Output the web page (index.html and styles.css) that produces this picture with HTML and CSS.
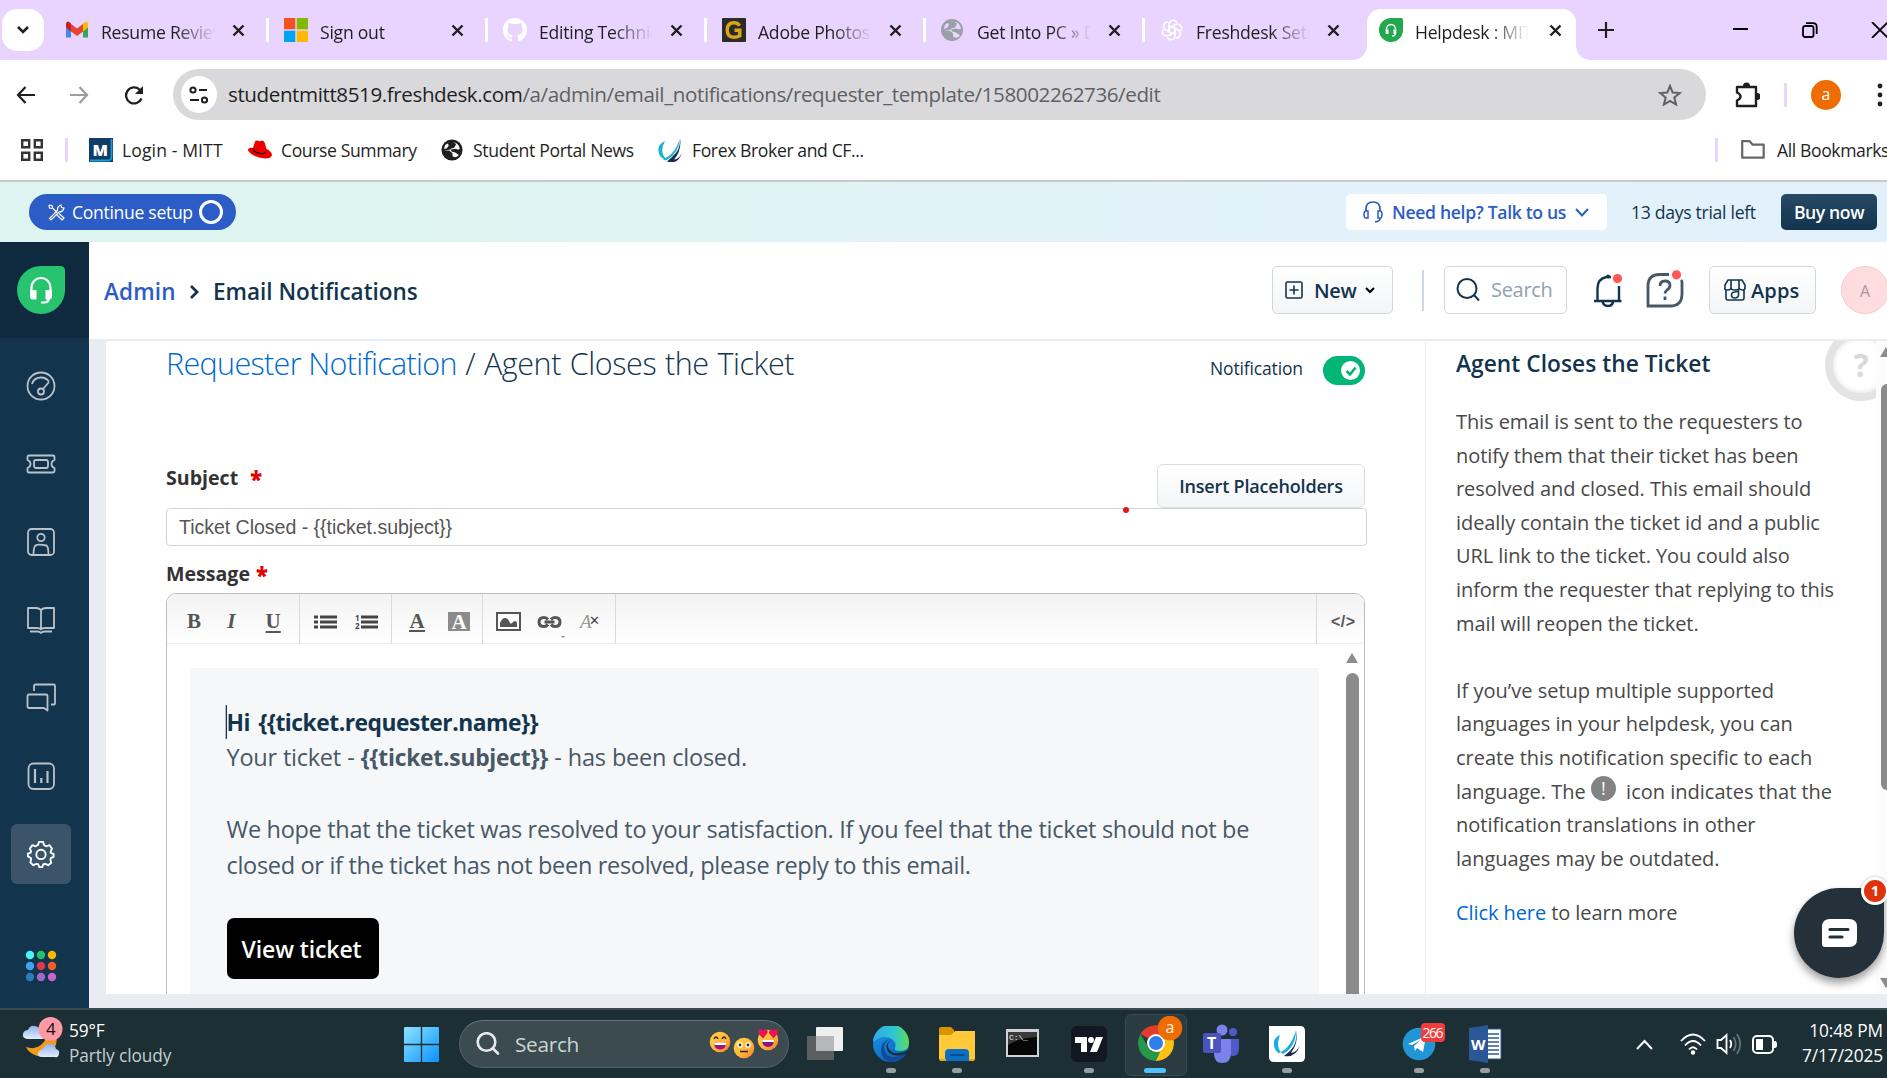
FILE: index.html
```html
<!DOCTYPE html>
<html lang="en">
<head>
<meta charset="utf-8">
<title>Helpdesk : MITT</title>
<link rel="stylesheet" href="styles.css">
</head>
<body>
<header class="tabstrip">
  <button class="tabsearch"><svg width="14" height="10" viewBox="0 0 14 10"><path d="M2 2l5 5 5-5" fill="none" stroke="#1f1f1f" stroke-width="2.6"/></svg></button>
  <div class="tab">
    <svg class="fav" viewBox="0 0 24 24"><path d="M1 5v14.500h5V9z" fill="#4285f4"/><path d="M23 5v14.500h-5V9z" fill="#34a853"/><path d="M18 5.500L21 3.500q2 0 2 2.500v3.500l-5 4z" fill="#fbbc04"/><path d="M6 6l6 4.500L18 6v7.500l-6 4.500-6-4.500z" fill="#ea4335"/><path d="M1 9.500V6q0-2.500 2.500-2.500L6 5.500v8z" fill="#c5221f"/></svg>
    <span class="tabtitle">Resume Review</span><svg class="x" viewBox="0 0 13 13"><path d="M1.500 1.500l10 10M11.500 1.500l-10 10"/></svg><i class="sep"></i>
  </div>
  <div class="tab">
    <svg class="fav" viewBox="0 0 24 24"><path d="M0 0h11.300v11.300H0z" fill="#f25022"/><path d="M12.700 0H24v11.300H12.700z" fill="#7fba00"/><path d="M0 12.700h11.300V24H0z" fill="#00a4ef"/><path d="M12.700 12.700H24V24H12.700z" fill="#ffb900"/></svg>
    <span class="tabtitle">Sign out</span><svg class="x" viewBox="0 0 13 13"><path d="M1.500 1.500l10 10M11.500 1.500l-10 10"/></svg><i class="sep"></i>
  </div>
  <div class="tab">
    <svg class="fav" viewBox="0 0 16 16"><path fill="#fff" d="M8 0C3.580 0 0 3.580 0 8c0 3.540 2.290 6.530 5.470 7.590.4.070.55-.17.55-.38v-1.490c-2.010.37-2.530-.49-2.690-.94-.09-.23-.48-.94-.82-1.130-.28-.15-.68-.52-.01-.53.63-.01 1.080.58 1.230.82.72 1.210 1.870.87 2.330.66.07-.52.28-.87.51-1.070-1.780-.2-3.640-.89-3.640-3.950 0-.87.31-1.590.82-2.150-.08-.2-.36-1.020.08-2.120 0 0 .67-.21 2.200.82A7.400 7.400 0 0 1 8 3.860c.68 0 1.360.09 2 .27 1.530-1.040 2.200-.82 2.200-.82.44 1.100.16 1.920.08 2.120.51.56.82 1.270.82 2.150 0 3.070-1.870 3.750-3.650 3.950.29.25.54.73.54 1.480v2.200c0 .21.15.46.55.38A8 8 0 0 0 16 8c0-4.420-3.580-8-8-8z"/></svg>
    <span class="tabtitle">Editing Technical</span><svg class="x" viewBox="0 0 13 13"><path d="M1.500 1.500l10 10M11.500 1.500l-10 10"/></svg><i class="sep"></i>
  </div>
  <div class="tab">
    <svg class="fav" viewBox="0 0 24 24"><rect width="24" height="24" rx="1" fill="#2b2b2b"/><path d="M17.500 7.800Q16 4.800 12 4.800q-6.800 0-6.800 7.200t6.800 7.200q3 0 5.800-1.500V12.300H12.500" fill="none" stroke="#dca516" stroke-width="3.400"/></svg>
    <span class="tabtitle">Adobe Photoshop</span><svg class="x" viewBox="0 0 13 13"><path d="M1.500 1.500l10 10M11.500 1.500l-10 10"/></svg><i class="sep"></i>
  </div>
  <div class="tab">
    <svg class="fav" viewBox="0 0 24 24"><circle cx="11" cy="12" r="11" fill="#9aa0a6"/><path d="M2.500 12.500h6l3.500 3v3q4 3 7-1-4-4-8-4l-1-3 4-1 2-4-3-2q6 1 7 7-2 2-4 0M3 11q0-5 4-6l1 2-2 3z" fill="#e8d4ff"/></svg>
    <span class="tabtitle">Get Into PC » Download</span><svg class="x" viewBox="0 0 13 13"><path d="M1.500 1.500l10 10M11.500 1.500l-10 10"/></svg><i class="sep"></i>
  </div>
  <div class="tab">
    <svg class="fav" viewBox="0 0 24 24"><g fill="none" stroke="#fff" stroke-width="1.500"><path id="petal" d="M9 13.700V6.500a4.200 4.200 0 0 1 8-1.800M9 10.200l5.700-3.300"/><use href="#petal" transform="rotate(60 12 12)"/><use href="#petal" transform="rotate(120 12 12)"/><use href="#petal" transform="rotate(180 12 12)"/><use href="#petal" transform="rotate(240 12 12)"/><use href="#petal" transform="rotate(300 12 12)"/></g></svg>
    <span class="tabtitle">Freshdesk Setup</span><svg class="x" viewBox="0 0 13 13"><path d="M1.500 1.500l10 10M11.500 1.500l-10 10"/></svg>
  </div>
  <div class="tab active">
    <svg class="fav" viewBox="0 0 24 24"><path d="M12 0h10q2 0 2 2v10A12 12 0 1 1 12 0z" fill="#22a94f"/><path d="M7.500 15v-4a4.500 4.500 0 0 1 9 0v4M16.500 15q0 3-3.500 3" fill="none" stroke="#fff" stroke-width="1.400"/><path d="M6.800 11.500h2.700V16H6.800zM14.500 11.500h2.700V16h-2.700z" fill="#fff"/></svg>
    <span class="tabtitle">Helpdesk : MITT</span><svg class="x" viewBox="0 0 13 13"><path d="M1.500 1.500l10 10M11.500 1.500l-10 10"/></svg>
  </div>
  <svg class="newtab" width="16" height="16" viewBox="0 0 16 16"><path d="M8 0v16M0 8h16" stroke="#1f1f1f" stroke-width="2.200"/></svg>
  <div class="winctl">
    <svg width="16" height="16" viewBox="0 0 16 16"><path d="M0 7h15" stroke="#000" stroke-width="2"/></svg>
    <svg width="16" height="16" viewBox="0 0 16 16" fill="none" stroke="#000" stroke-width="1.800"><rect x="1" y="4" width="10.500" height="11" rx="2"/><path d="M4 1.200h7q3.700 0 3.700 3.700v7"/></svg>
    <svg width="18" height="16" viewBox="0 0 18 16"><path d="M1 0l16 16M17 0L1 16" stroke="#000" stroke-width="1.800"/></svg>
  </div>
</header>

<div class="toolbar">
  <svg class="back" width="19" height="18" viewBox="0 0 19 18" fill="none" stroke="#1f1f1f" stroke-width="2.200"><path d="M9.500 1L2 9l7.500 8M2 9h17"/></svg>
  <svg class="fwd" width="19" height="18" viewBox="0 0 19 18" fill="none" stroke="#9c9c9c" stroke-width="2.200"><path d="M9.500 1L17 9l-7.500 8M17 9H0"/></svg>
  <svg class="reload" width="21" height="20" viewBox="0 0 21 20"><path d="M17.500 13.500A8 8 0 1 1 15.500 4.500L18 7" fill="none" stroke="#1f1f1f" stroke-width="2.300"/><path d="M19 1v8h-8z" fill="#1f1f1f"/></svg>
  <div class="omnibox">
    <span class="siteinfo"><svg width="20" height="18" viewBox="0 0 20 18" fill="none" stroke="#1f1f1f" stroke-width="2"><circle cx="4" cy="4" r="2.600"/><path d="M10 4h8M1 14h9"/><circle cx="15.500" cy="14" r="2.600"/></svg></span>
    <span class="url"><b>studentmitt8519.freshdesk.com</b>/a/admin/email_notifications/requester_template/158002262736/edit</span>
    <svg class="star" width="24" height="22" viewBox="0 0 24 22"><path d="M12 2l2.700 6.600 7 .5-5.400 4.500 1.800 6.900L12 16.800l-6.100 3.700 1.800-6.900L2.300 9.100l7-.5z" fill="none" stroke="#5f6063" stroke-width="2"/></svg>
  </div>
  <svg class="puzzle" width="26" height="26" viewBox="0 0 26 26"><path d="M3 5h19v19H3v-5.500q3.500-1.500 3.500-4T3 10.500z" fill="none" stroke="#1f1f1f" stroke-width="2.400" stroke-linejoin="round"/><path d="M9 4a3.500 3.500 0 0 1 7 0zM23 11a3 3 0 0 1 0 7z" fill="#1f1f1f"/></svg>
  <i class="vline"></i>
  <span class="profile">a</span>
  <svg class="dots" width="6" height="26" viewBox="0 0 6 26" fill="#1f1f1f"><circle cx="3" cy="4" r="2.400"/><circle cx="3" cy="13" r="2.400"/><circle cx="3" cy="22" r="2.400"/></svg>
</div>

<div class="bookmarks">
  <svg class="grid" width="22" height="22" viewBox="0 0 22 22" fill="none" stroke="#333" stroke-width="2.400"><path d="M1.200 1.200h7v7h-7zM13.800 1.200h7v7h-7zM1.200 13.800h7v7h-7zM13.800 13.800h7v7h-7z"/></svg>
  <i class="vline"></i>
  <span class="bm bm1"><svg width="24" height="24" viewBox="0 0 24 24"><path d="M0 0h24v24H0z" fill="#113c66"/><path d="M1 22.500h18q3.500 0 3.500-3.500V1" fill="none" stroke="#1b9ad6" stroke-width="1.800"/><text x="3.500" y="17.500" font-size="16" font-weight="800" fill="#fff">M</text></svg>Login - MITT</span>
  <span class="bm bm2"><svg width="24" height="20" viewBox="0 0 24 20"><path d="M5 8L7 1.500Q8 0 10 .8t4-.3q2 0 3 3L18.500 9q4.500 2 5.500 5.500 0 4-7 4Q4 17 0 10.500 0 7 5 8z" fill="#e00"/><path d="M5 8q1 4 7 5t6.500-3.500v2q-1 3.500-7 2.500T4.500 9.500z" fill="#000"/></svg>Course Summary</span>
  <span class="bm bm3"><svg width="22" height="22" viewBox="0 0 24 24"><circle cx="12" cy="12" r="11.500" fill="#1f1f1f"/><path d="M3 12.500h6l3.500 3v3q4 3 7-1-4-4-8-4l-1-3 4-1 2-4-3-2q6 1 7 7-2 2-4 0M3.500 11q0-5 4-6l1 2-2 3z" fill="#fff"/></svg>Student Portal News</span>
  <span class="bm bm4"><svg width="25" height="24" viewBox="0 0 25 24"><path d="M7 3Q-3 8 2 18q3 4 6 3Q1 14 7 3z" fill="#18b4cf"/><path d="M22 0Q21 15 9 22q-3 1-4-1Q17 17 22 0z" fill="#18b4cf"/><path d="M22 0q1 12-8 19l-5 4.500Q20 27 24 15q-3 6-8 6.500Q24 12 22 0z" fill="#1c2b52"/></svg>Forex Broker and CF...</span>
  <i class="vline end"></i>
  <span class="bm all"><svg width="24" height="19" viewBox="0 0 24 19"><path d="M1.200 1.200h7.500l3 3.500h11v13H1.200z" fill="none" stroke="#666" stroke-width="2.200" stroke-linejoin="round"/></svg>All Bookmarks</span>
</div>

<div class="trialbar">
  <button class="setup"><svg width="17" height="17" viewBox="0 0 17 17" fill="none" stroke="#fff" stroke-width="1.200"><path d="M1.500 14.500l8-8Q9 2.500 13 1l.5 2.500L16 4q-1 4-5 4l-8 8zM1 1l3 .5.500 2.500L9 8.500M1 1l.5 3L4 4.500M11 9.500l5 4.500-2 2-5-5"/></svg>Continue setup<i></i></button>
  <button class="talk"><svg width="20" height="22" viewBox="0 0 20 22" fill="none" stroke="#2c5cc5" stroke-width="1.700"><path d="M3 10V8q0-7 7-7t7 7v2M17 17v1q0 2-5 3"/><path d="M5 10v7H3q-2 0-2-3.500T3 10zM15 10v7h2q2 0 2-3.500T17 10z" stroke-width="1.500"/></svg><b>Need help? Talk to us</b><svg width="14" height="9" viewBox="0 0 14 9"><path d="M1 1l6 6.500L13 1" fill="none" stroke="#2c5cc5" stroke-width="2"/></svg></button>
  <span class="days">13 days trial left</span>
  <button class="buy">Buy now</button>
</div>

<div class="app">
  <nav class="sidebar">
    <div class="logo"><svg width="48" height="48" viewBox="0 0 48 48"><path d="M24 0h19q5 0 5 5v19A24 24 0 1 1 24 0z" fill="#27c36f"/><path d="M14.500 25v-3.500a9.500 9.500 0 0 1 19 0V25M32 31q0 5-4 5.500h-4" fill="none" stroke="#fff" stroke-width="2.200"/><path d="M13 24h6.500v9.500H16q-3 0-3-3zM28.500 24H35v6.500q0 3-3 3h-3.500z" fill="#fff"/></svg></div>
    <div class="navitems">
      <span><svg viewBox="0 0 30 30"><circle cx="15" cy="15" r="13.500"/><path d="M6 13Q8 6.500 15 6.500q5 0 8 4M17 18l6-7"/><circle cx="15" cy="20.500" r="3"/></svg></span>
      <span><svg viewBox="0 0 30 30"><path d="M3 6.500h24q1.500 0 1.500 1.500v3q-3 1-3 4t3 4v3q0 1.500-1.500 1.500H3Q1.500 23.500 1.500 22v-3q3-1 3-4t-3-4V8Q1.500 6.500 3 6.500z"/><rect x="8" y="11" width="14" height="8" rx="2"/></svg></span>
      <span><svg viewBox="0 0 30 30"><rect x="2" y="2" width="26" height="26" rx="3.500"/><circle cx="15" cy="10.500" r="3.700"/><path d="M7.500 28q0-8 2-9.500t11 0q2 1.500 2 9.500"/></svg></span>
      <span><svg viewBox="0 0 30 30"><path d="M15 5q-2-2-5-2H2v20h9q3 0 4 1.500 1-1.500 4-1.500h9V3h-8q-3 0-5 2v19M4 26.500h7q3 0 4 1.500 1-1.500 4-1.500h7"/></svg></span>
      <span><svg viewBox="0 0 30 30"><path d="M8 8V3q0-1.500 1.500-1.500h18Q29 1.500 29 3v17.500q0 1-1 1h-3"/><path d="M3 11.500h17q1.500 0 1.500 1.500v14.500L18 25H3q-1.500 0-1.500-1.500V13q0-1.500 1.500-1.500z"/></svg></span>
      <span><svg viewBox="0 0 30 30"><rect x="2.500" y="2.500" width="25.500" height="25.500" rx="5"/><path d="M9 8v14M15.300 17v5M21.500 10v12" stroke-width="2.200"/></svg></span>
      <span class="on"><svg viewBox="0 0 30 30"><path d="M11.800 5.200L12.800 2h4.400l1 3.200q1 1 2.700 1.500L24 5.500l2.800 3.700-1.500 3.300q0 .8.500 1.500l2.700 1v3l-3 1.500-.5 1.500 1 3.300-3.300 2.700-3.200-1.500-2 .5-1.300 3h-3l-1.200-3-2-.5-3.200 1.500L3.500 24l1-3.300-.5-1.500-3-1.500v-3l3-1.200.3-1.500L3 9.200l2.800-3.700 3.300 1.200z"/><circle cx="15" cy="15.500" r="5"/></svg></span>
    </div>
    <svg class="apps9" width="32" height="32" viewBox="0 0 32 32"><circle cx="5" cy="5" r="4.200" fill="#4af3f8"/><circle cx="16" cy="5" r="4.200" fill="#24c16b"/><circle cx="27" cy="5" r="4.200" fill="#ffb700"/><circle cx="5" cy="16" r="4.200" fill="#45a4ee"/><circle cx="16" cy="16" r="4.200" fill="#d83b50"/><circle cx="27" cy="16" r="4.200" fill="#f15f27"/><circle cx="5" cy="27" r="4.200" fill="#3079b8"/><circle cx="16" cy="27" r="4.200" fill="#a066c8"/><circle cx="27" cy="27" r="4.200" fill="#c765c9"/></svg>
  </nav>

  <div class="main">
    <div class="apphead">
      <a class="crumb">Admin</a><svg class="chev" width="9" height="14" viewBox="0 0 9 14"><path d="M1 1l6 6-6 6" fill="none" stroke="#12344d" stroke-width="2.800"/></svg><h1>Email Notifications</h1>
      <button class="btn new"><svg width="18" height="18" viewBox="0 0 18 18" fill="none" stroke="#12344d" stroke-width="1.600"><rect x="1" y="1" width="16" height="16" rx="1.500"/><path d="M9 4.500v9M4.500 9h9"/></svg>New<svg width="10" height="7" viewBox="0 0 10 7"><path d="M1 1l4 4 4-4" fill="none" stroke="#000" stroke-width="2.200"/></svg></button>
      <i class="hdiv"></i>
      <div class="search"><svg width="24" height="24" viewBox="0 0 24 24" fill="none" stroke="#12344d" stroke-width="2"><circle cx="11" cy="10.500" r="9.500"/><path d="M18 17l5 5.500"/></svg>Search</div>
      <svg class="bell" width="28" height="34" viewBox="0 0 28 34" fill="none" stroke="#12344d" stroke-width="2.400"><path d="M0 28h27.500M3.500 28V15q0-9 9-11h4.500M25 13v15M8.500 28.500q1 4.500 5.500 4.500t5-4.500"/><circle cx="14" cy="3.500" r="1.500" fill="#12344d" stroke-width="1"/><circle cx="23.500" cy="5.500" r="4.600" fill="#ff5656" stroke="none"/></svg>
      <svg class="help" width="38" height="38" viewBox="0 0 38 38" fill="none" stroke="#475867" stroke-width="2.800"><path d="M23 4.500H14Q2 4.500 2 16v20h22q12 0 12-12V12q0-1-1-2"/><path d="M14 16q0-5 5-5t5 4.500q0 2.500-3 4.500-2 1.500-2 3.500M19 26.500v3.500"/><circle cx="30.500" cy="4.800" r="4.600" fill="#ff5656" stroke="none"/></svg>
      <button class="btn appsbtn"><svg width="22" height="22" viewBox="0 0 22 22" fill="none" stroke="#12344d" stroke-width="1.600"><path d="M4 1h14l3 5v3q0 2-2.500 2T15 9q0 2-4 2T7 9q0 2-3.500 2T1 9V6zM2 11v8q0 2 2 2h14q2 0 2-2v-8M7 9V1M15 9V1"/><path d="M14.500 12v4a3.500 3 0 1 1-3.500-3z"/></svg>Apps</button>
      <span class="avatar">A</span>
    </div>
    <div class="canvas">
      <div class="panel">
        <section class="form">
          <div class="titlerow"><h2><a>Requester Notification</a> <em>/ Agent Closes the Ticket</em></h2><span class="nlabel">Notification</span><span class="toggle"><i><svg width="12" height="10" viewBox="0 0 12 10"><path d="M1.500 5L5 8.500l5.500-7" fill="none" stroke="#00b36b" stroke-width="2.500"/></svg></i></span></div>
          <div class="subjrow"><label>Subject <b class="gap">*</b></label><button class="insert">Insert Placeholders</button></div>
          <div class="input">Ticket Closed - {{ticket.subject}}<i class="reddot"></i></div>
          <label class="msg">Message <b>*</b></label>
          <div class="editor">
            <div class="edbar">
              <div class="g g1"><b>B</b><b class="it">I</b><b class="ul">U</b></div>
              <div class="g g2"><svg width="23" height="14" viewBox="0 0 23 14" stroke="#444" stroke-width="3"><path d="M0 2h4M6 2h17M0 7h4M6 7h17M0 12h4M6 12h17"/></svg><svg width="23" height="16" viewBox="0 0 23 16"><path d="M6 3h17M6 8h17M6 13h17" stroke="#444" stroke-width="3"/><text x="0" y="7" font-size="8">1</text><text x="0" y="15" font-size="8">2</text></svg></div>
              <div class="g g3"><b class="fc">A</b><b class="bc">A</b></div>
              <div class="g g4"><svg width="25" height="19" viewBox="0 0 25 19"><rect x="1" y="1" width="23" height="17" fill="#fff" stroke="#555" stroke-width="2"/><path d="M4 15v-4q2-5 5-5 3 0 5 5 1 1 2 0 2-2 3-2 2 0 2 3v3z" fill="#555"/></svg><svg width="25" height="12" viewBox="0 0 25 12" fill="none" stroke="#555" stroke-width="3"><path d="M11 3.500Q9.500 1.500 7 1.500q-5 0-5 4.500t5 4.500q2.500 0 4-2M14 3.500q1.500-2 4-2 5 0 5 4.500t-5 4.500q-2.500 0-4-2M7.500 6h10"/></svg><span class="clr">A<b>✕</b></span><i class="tri"></i></div>
              <div class="g g5">&lt;/&gt;</div>
            </div>
            <div class="edbody">
              <div class="mail">
                <p class="hi">Hi {{ticket.requester.name}}</p>
                <p class="l2">Your ticket - <b>{{ticket.subject}}</b> - has been closed.</p>
                <p class="para">We hope that the ticket was resolved to your satisfaction. If you feel that the ticket should not be<br>closed or if the ticket has not been resolved, please reply to this email.</p>
                <a class="view">View ticket</a>
              </div>
              <div class="escroll"><i class="up"></i><i class="thumb"></i></div>
            </div>
          </div>
        </section>
        <aside class="info">
          <h3>Agent Closes the Ticket</h3>
          <p>This email is sent to the requesters to<br>notify them that their ticket has been<br>resolved and closed. This email should<br>ideally contain the ticket id and a public<br>URL link to the ticket. You could also<br>inform the requester that replying to this<br>mail will reopen the ticket.</p>
          <p>If you’ve setup multiple supported<br>languages in your helpdesk, you can<br>create this notification specific to each<br>language. The <i class="warn">!</i> icon indicates that the<br>notification translations in other<br>languages may be outdated.</p>
          <p class="more"><a>Click here</a> to learn more</p>
          <span class="qmark">?</span>
        </aside>
        <div class="pscroll"><i class="up"></i><i class="thumb"></i><i class="down"></i></div>
      </div>
    </div>
  </div>
  <div class="chat"><svg width="35" height="28" viewBox="0 0 35 28"><path d="M8 0h19q8 0 8 8v12q0 8-8 8H3q-3 0-3-3V8q0-8 8-8z" fill="#fff"/><path d="M8 10.500h18M8 18h12" stroke="#24313a" stroke-width="3.200" stroke-linecap="round"/></svg><span>1</span></div>
</div>

<footer class="taskbar">
  <div class="weather">
    <svg width="42" height="42" viewBox="0 0 42 42"><defs><linearGradient id="cl" x2="0" y2="1"><stop stop-color="#8fb3ec"/><stop offset="1" stop-color="#e2ecfc"/></linearGradient></defs><path d="M34 16a15 15 0 0 1-29 14q9 3 15-2t8-16z" fill="#f39a1e"/><path d="M6 22q-5-1-4-5t5-4q2-5 7-4t5 5q4 1 3 8z" fill="url(#cl)"/><path d="M20 40q-4-1-3-4t5-4q2-5 7-5t6 5q4 1 3 5t-4 3z" fill="url(#cl)"/><circle cx="29.500" cy="12" r="12" fill="#ff99a4"/><text x="25" y="18" font-size="17" fill="#111">4</text></svg>
    <div><p>59°F</p><p class="dim">Partly cloudy</p></div>
  </div>
  <svg class="start" width="35" height="35" viewBox="0 0 35 35"><defs><linearGradient id="wn" x2="1" y2="1"><stop stop-color="#8be3ff"/><stop offset="1" stop-color="#0a93ff"/></linearGradient></defs><path d="M0 1q0-1 1-1h15.800v16.800H0zM18.200 0H34q1 0 1 1v15.800H18.200zM0 18.200h16.800V35H1q-1 0-1-1zM18.200 18.200H35V34q0 1-1 1H18.200z" fill="url(#wn)"/></svg>
  <div class="tsearch"><svg width="24" height="24" viewBox="0 0 24 24" fill="none" stroke="#e6eaeb" stroke-width="2.600"><circle cx="10.500" cy="10" r="8.800"/><path d="M17 16.500l5 5" stroke-linecap="round"/></svg>Search
    <svg class="emojis" width="70" height="30" viewBox="0 0 70 30"><defs><linearGradient id="em" x1="0" x2="1" y2="1"><stop stop-color="#ffd93f"/><stop offset=".6" stop-color="#ffb436"/><stop offset="1" stop-color="#f2742b"/></linearGradient></defs><circle cx="11" cy="13" r="10.300" fill="url(#em)"/><path d="M5 13.500h12q0 7-6 7t-6-7z" fill="#a3137f"/><path d="M5 13.500h12v2.500H5.500z" fill="#fff"/><path d="M5 10q2-4 4 0M13 10q2-4 4 0" fill="none" stroke="#402a32" stroke-width="1.500"/><circle cx="35" cy="19" r="10.300" fill="url(#em)"/><circle cx="31" cy="16" r="2.800" fill="#fff"/><circle cx="39" cy="16" r="2.800" fill="#fff"/><circle cx="31" cy="16" r="1.400" fill="#402a32"/><circle cx="39" cy="16" r="1.400" fill="#402a32"/><path d="M31 22.500h8" stroke="#402a32" stroke-width="1.700"/><circle cx="59" cy="11" r="10.300" fill="url(#em)"/><path d="M53 11h12q0 7-6 7t-6-7z" fill="#8f1386"/><path d="M53 11h12v2H53.500z" fill="#fff"/><path d="M54 9.500L49 4q0-4 3-4l2 1.500L56.500 0Q59 0 58.500 4zM64.500 9.500L60 4q0-4 3-4l1.500 1.500L67 0q3 1 2 4z" fill="#e8145b"/></svg>
  </div>
  <div class="tasks">
    <span><svg width="38" height="36" viewBox="0 0 38 36"><rect x="1" y="10" width="27" height="24" rx="1" fill="#5c5f60"/><rect x="10" y="1" width="27" height="24" rx="1" fill="#efefef"/><path d="M10 10h18v15H10z" fill="#b5b7b8"/></svg></span>
    <span class="run"><svg width="36" height="36" viewBox="0 0 36 36"><defs><linearGradient id="eg" x2="1"><stop stop-color="#2fa9ef"/><stop offset=".6" stop-color="#2fc6cf"/><stop offset="1" stop-color="#5fdc55"/></linearGradient><linearGradient id="eb" x2=".6" y2="1"><stop stop-color="#1b9de6"/><stop offset="1" stop-color="#0a63c4"/></linearGradient></defs><circle cx="18" cy="18" r="18" fill="url(#eb)"/><path d="M0 16A18 18 0 0 1 36 17q0 8-9 8-6 0-5-3 2-5-3-9Q10 8 0 16z" fill="url(#eg)"/><path d="M11 22q1 9 10 9 7 0 12-4-6 9-16 9-9-3-9-12 0-8 8-11-5 4-5 9z" fill="#114a97"/><path d="M18 14q-5 4-2 9 3 5 10 4 5 0 9-3l3 1-5 3q-10 4-17-1-6-8 2-13z" fill="#1c3034"/></svg></span>
    <span class="run"><svg width="36" height="34" viewBox="0 0 36 34"><path d="M0 2q0-2 2-2h10l3 3v6H0z" fill="#d99400"/><path d="M0 8h12l4-4h20v28H0z" fill="#ffc93a"/><path d="M6 34v-8q0-4 4-4h16q4 0 4 4v8z" fill="#0d6fc2"/><path d="M11 28h14" stroke="#0a4d94" stroke-width="2"/><path d="M0 32h7v2H1zM30 32h6l-1 2h-5z" fill="#e9a90e"/></svg></span>
    <span><svg class="cmd" width="33" height="28" viewBox="0 0 33 28"><path d="M0 0h33v28H0z" fill="#cfd3d5"/><path d="M2 3h29v23H2z" fill="#070707"/><path d="M2 3h29v5Q12 9 2 16z" fill="#3a3a3a"/><text x="3" y="11" font-size="8" class="mono" fill="#eee">C:\_</text></svg></span>
    <span class="run"><svg width="36" height="36" viewBox="0 0 36 36"><rect width="36" height="36" rx="6" fill="#131722"/><path d="M4 11h12v15h-6v-9H4z" fill="#fff"/><circle cx="20" cy="14" r="3" fill="#fff"/><path d="M25 11h7l-6 15h-7z" fill="#fff"/></svg></span>
    <span class="run cur"><svg width="46" height="46" viewBox="0 0 46 46"><path d="M19 27L3.500 18A18 18 0 0 1 34.500 18z" fill="#e33b2e"/><path d="M19 27l15.500-9A18 18 0 0 1 19 45z" fill="#fbc116"/><path d="M19 45A18 18 0 0 1 3.500 18L11.200 31.500q3 5 7.800 4.500h4z" fill="#269847"/><circle cx="19" cy="27" r="9" fill="#fff"/><circle cx="19" cy="27" r="7" fill="#2f7de9"/><circle cx="33" cy="12" r="12.300" fill="#ee6c02"/><text x="28.500" y="17" font-size="16" fill="#fff3e2">a</text></svg></span>
    <span><svg width="36" height="40" viewBox="0 0 36 40"><circle cx="19" cy="6" r="5.500" fill="#7b83eb"/><circle cx="30" cy="8" r="4" fill="#5059c9"/><path d="M24 15h12v10q0 7-6 7-5 0-6-5z" fill="#5059c9"/><path d="M11 15h17v14q0 10-9 10-8 0-8-10z" fill="#7b83eb"/><rect y="9" width="18" height="20" rx="2" fill="#4b53bc"/><text x="4" y="25" font-size="16" font-weight="700" fill="#fff">T</text></svg></span>
    <span class="run"><svg width="36" height="36" viewBox="0 0 36 36"><path d="M0 0h31q5 0 5 5v26q0 5-5 5H5q-5 0-5-5z" fill="#fff"/><path d="M11 9Q2 13 6 23q3 6 8 5Q6 22 11 9zM27 4q0 17-13 24-3 1-4-1Q22 22 27 4z" fill="#18aee6"/><path d="M27 4q2 13-6 21l-6 5q12 2 16-11-3 7-9 8Q30 16 27 4z" fill="#1b2748"/></svg></span>
    <span></span>
    <span class="run"><svg class="tg" width="44" height="40" viewBox="0 0 44 40"><circle cx="17" cy="22" r="16.300" fill="#2295d4"/><path d="M6 22l18-8-3 16-6-4-2 3-1-5 7-6-9 5z" fill="#fff"/><rect x="19" y="1" width="24" height="19" rx="4" fill="#f23b3b"/><text x="20.500" y="16" font-size="14" fill="#fff" textLength="21">266</text></svg></span>
    <span class="run"><svg width="33" height="38" viewBox="0 0 33 38"><rect x="15" y="4" width="17" height="30" fill="#fff" stroke="#2b5797"/><path d="M19 9h11M19 13h11M19 17h11M19 21h11M19 25h11M19 29h11" stroke="#2b5797" stroke-width="1.600"/><path d="M0 3l19-3v38L0 35z" fill="#2b5797"/><text x="2" y="25" font-size="15" font-weight="700" fill="#fff">W</text></svg></span>
  </div>
  <div class="tray">
    <svg width="17" height="11" viewBox="0 0 17 11"><path d="M1 10l7.500-8L16 10" fill="none" stroke="#fff" stroke-width="2"/></svg>
    <svg class="wifi" width="26" height="22" viewBox="0 0 26 22" fill="none" stroke="#fff" stroke-width="1.800"><path d="M1 8q12-13 24 0M5 12.500q8-9 16 0M9 16.500q4-4.500 8 0"/><circle cx="13" cy="19.500" r="1.300" fill="#fff"/></svg>
    <svg class="vol" width="26" height="24" viewBox="0 0 26 24" fill="none" stroke="#fff" stroke-width="1.800"><path d="M1.500 8H5l5.500-5v18L5 16H1.500zM14 8q2.500 4 0 8"/><path d="M17.500 5q4.500 7 0 14M21 2q6.500 10 0 20" stroke="#64757a"/></svg>
    <svg class="batt" width="25" height="19" viewBox="0 0 25 19"><rect x="1" y="1" width="20" height="17" rx="4" fill="none" stroke="#fff" stroke-width="2"/><path d="M4 4h7v11H4zM22 6h1q2 0 2 3.500T23 13h-1z" fill="#fff"/></svg>
    <div class="clock"><p>10:48 PM</p><p>7/17/2025</p></div>
  </div>
</footer>
</body>
</html>
```
FILE: styles.css
```css
* { box-sizing: border-box; }
body { margin: 0; width: 1887px; height: 1078px; overflow: hidden; display: flex; flex-direction: column; font-family: "Open Sans", "Noto Sans", sans-serif; color: #1f1f1f; background: #fff; }
h1, h2, h3, p { margin: 0; font-weight: 400; }
button { border: 0; padding: 0; font: inherit; color: inherit; }
i { font-style: normal; }
svg { flex: none; display: block; }
svg text { font-family: "Open Sans", sans-serif; }
svg .mono { font-family: "Liberation Mono", monospace; }

/* tab strip */
.tabstrip { height: 60px; flex: none; background: #e8d4ff; display: flex; align-items: center; padding-left: 2px; }
.tabsearch { width: 42px; height: 42px; border-radius: 15px; background: #fff; margin-right: 9px; display: flex; align-items: center; justify-content: center; flex: none; }
.tab { width: 219px; height: 51px; flex: none; align-self: flex-end; display: flex; align-items: center; padding: 0 0 9px 12px; font-size: 17.600px; letter-spacing: -.25px; position: relative; }
.fav { width: 24px; height: 24px; margin-right: 12px; }
.tabtitle { width: 114px; margin-right: 17px; white-space: nowrap; overflow: hidden; line-height: 26px; padding-top: 3px; -webkit-mask-image: linear-gradient(90deg, #000 65%, transparent); mask-image: linear-gradient(90deg, #000 65%, transparent); }
.x { width: 13px; height: 13px; margin-right: 21px; }
.x path { stroke: #1f1f1f; stroke-width: 2.400; fill: none; }
.sep { width: 3px; height: 24px; background: #fff; border-radius: 1px; }
.active { width: 209px; background: #fff; border-radius: 14px 14px 0 0; }
.active .tabtitle { margin-right: 20px; }
.active .x { margin-right: 0; }
.active::before, .active::after { content: ""; position: absolute; bottom: 0; width: 14px; height: 14px; }
.active::before { left: -14px; background: radial-gradient(circle at 0 0, transparent 13.500px, #fff 14px); }
.active::after { right: -14px; background: radial-gradient(circle at 100% 0, transparent 13.500px, #fff 14px); }
.newtab { margin-left: 22px; }
.winctl { margin-left: auto; display: flex; gap: 53px; margin-right: -2px; }

/* toolbar */
.toolbar { height: 69px; flex: none; display: flex; align-items: center; padding-left: 16px; }
.back { margin-right: 35px; }
.fwd { margin-right: 35px; }
.reload { margin-right: 28px; }
.omnibox { width: 1533px; height: 51px; border-radius: 26px; background: #d9d9db; display: flex; align-items: center; padding-left: 8px; flex: none; }
.siteinfo { width: 36px; height: 37px; border-radius: 50%; background: #fff; display: flex; align-items: center; justify-content: center; margin-right: 11px; }
.url { font-size: 20.600px; letter-spacing: -.41px; color: #5f6063; white-space: nowrap; padding-bottom: 2px; }
.url b { font-weight: 400; color: #1f1f1f; }
.star { margin-left: auto; margin-right: 24px; }
.puzzle { margin-left: 28px; margin-right: 24px; }
.vline { width: 3px; height: 24px; background: #e8d4ff; flex: none; }
.profile { width: 30px; height: 30px; border-radius: 50%; background: #ef6c00; color: #fff; font-size: 16px; line-height: 28px; text-align: center; margin: 0 36px 0 24px; flex: none; }

/* bookmarks */
.bookmarks { height: 53px; flex: none; display: flex; align-items: center; padding: 0 0 10px 21px; border-bottom: 2px solid #cacaca; font-size: 17.600px; letter-spacing: -.4px; white-space: nowrap; overflow: hidden; }
.bookmarks .grid { margin-right: 22px; }
.bm { display: flex; align-items: center; flex: none; }
.bm svg { margin-right: 9px; }
.bm1 { margin-left: 21px; width: 159px; letter-spacing: .1px; }
.bm2 { width: 193px; }
.bm3 { width: 217px; letter-spacing: -.35px; }
.bm3 svg { margin-right: 10px; }
.end { margin-left: auto; margin-right: 23px; }
.all { width: 146px; }
.all svg { margin-right: 12px; }

/* trial bar */
.trialbar { height: 60px; flex: none; display: flex; align-items: center; padding: 0 10px 0 29px; background: linear-gradient(90deg, #def4f0 20%, #e3f2fa 70%, #e2f0fb); font-size: 17.600px; white-space: nowrap; }
.setup { width: 207px; height: 36px; border-radius: 18px; background: #2c5cc5; color: #fff; display: flex; align-items: center; padding-left: 19px; letter-spacing: -.32px; }
.setup svg { margin-right: 7px; }
.setup i { width: 24px; height: 24px; border: 3.500px solid #fff; border-radius: 50%; margin-left: 6px; }
.talk { width: 261px; height: 36px; border-radius: 5px; background: #fff; color: #2c5cc5; display: flex; align-items: center; padding-left: 17px; margin-left: auto; }
.talk b { font-weight: 600; letter-spacing: -.33px; margin: 0 9px 0 9px; }
.days { width: 126px; margin: 0 24px 0 24px; letter-spacing: -.3px; color: #12344d; }
.buy { width: 96px; height: 36px; border-radius: 5px; background: linear-gradient(#264966, #12344d); color: #fff; font-weight: 600; letter-spacing: -.4px; }

/* application */
.app { height: 766px; flex: none; display: flex; position: relative; }
.sidebar { width: 89px; background: #12344d; flex: none; display: flex; flex-direction: column; }
.logo { height: 96px; background: #0f2a3e; padding: 24px 0 0 17px; }
.navitems { display: flex; flex-direction: column; gap: 18px; padding: 18px 0 0 11px; }
.navitems span { width: 60px; height: 60px; border-radius: 6px; display: flex; align-items: center; justify-content: center; }
.navitems svg { width: 30px; height: 30px; fill: none; stroke: #b9c2ca; stroke-width: 1.800; stroke-linejoin: round; }
.navitems .on { background: #3b5469; }
.navitems .on svg { stroke: #fff; width: 28px; height: 28px; stroke-width: 2; }
.apps9 { margin: 66px 0 0 25px; }
.main { flex: 1; display: flex; flex-direction: column; min-width: 0; }
.apphead { height: 99px; flex: none; border-bottom: 2px solid #e9ecf2; display: flex; align-items: center; padding: 0 0 1px 15px; overflow: hidden; color: #12344d; }
.crumb { font-size: 22.500px; font-weight: 600; color: #2c5cc5; letter-spacing: .15px; width: 72px; padding-top: 3px; }
.chev { margin: 3px 14px 0 14px; }
.apphead h1 { font-size: 22.500px; font-weight: 600; padding-top: 3px; }
.btn { height: 48px; border: 1.500px solid #cfd7df; border-radius: 5px; background: linear-gradient(#fff, #f3f5f7); display: flex; align-items: center; font-size: 20px; font-weight: 600; flex: none; }
.new { width: 121px; margin-left: auto; padding-left: 12px; letter-spacing: -.3px; }
.new svg:first-child { margin-right: 11px; }
.new svg:last-child { margin-left: 8px; }
.hdiv { width: 2px; height: 41px; background: #cfd7df; margin: 0 20px 0 29px; flex: none; }
.search { width: 123px; height: 48px; border: 1.500px solid #cfd7df; border-radius: 5px; display: flex; align-items: center; padding: 0 0 1px 11px; font-size: 20px; letter-spacing: -.3px; color: #92a2b1; flex: none; }
.search svg { margin-right: 11px; }
.bell { margin-left: 27px; }
.help { margin-left: 24px; margin-top: -3px; }
.appsbtn { width: 107px; margin-left: 25px; padding-left: 14px; letter-spacing: .15px; }
.appsbtn svg { margin-right: 5px; }
.avatar { width: 48px; height: 48px; border-radius: 50%; background: #ffdcdd; border: 1px solid #f6cccd; color: #a9979e; font-size: 16px; line-height: 48px; text-align: center; margin: 0 -2px 0 25px; flex: none; }
.canvas { flex: 1; background: #e9ecf2; padding: 0 0 14px 17px; min-height: 0; }
.panel { height: 653px; background: #fff; display: flex; overflow: hidden; position: relative; border-radius: 3px 0 0 0; }
.form { width: 1320px; flex: none; padding-left: 60px; border-right: 1.500px solid #e9ecf2; }
.titlerow { height: 123px; display: flex; align-items: flex-start; white-space: nowrap; }
.titlerow h2 { font-size: 30.500px; font-weight: 300; line-height: 44px; letter-spacing: -.66px; width: 1044px; color: #12344d; }
.titlerow a { color: #0069d2; }
.titlerow em { font-style: normal; letter-spacing: -.4px; word-spacing: 1.200px; margin-left: 1px; }
.nlabel { font-size: 17.500px; letter-spacing: -.15px; line-height: 26px; width: 113px; padding-top: 14px; color: #12344d; }
.toggle { width: 42px; height: 29px; border-radius: 15px; background: #00b677; margin-top: 15px; display: flex; align-items: center; justify-content: flex-end; padding-right: 5px; }
.toggle i { width: 19px; height: 19px; border-radius: 50%; background: #fff; display: flex; align-items: center; justify-content: center; }
.subjrow { height: 44px; width: 1199px; display: flex; justify-content: space-between; align-items: flex-start; }
label { font-size: 19.600px; font-weight: 700; color: #333; line-height: 28px; }
label b { color: #e00000; font-size: 22px; line-height: 20px; display: inline-block; vertical-align: -3px; margin-left: 1px; }
label .gap { margin-left: 7px; }
.insert { width: 208px; height: 44px; border: 1.500px solid #d8dfe4; border-radius: 6px; background: linear-gradient(#fff, #f4f5f7); font-size: 18px; font-weight: 600; letter-spacing: -.18px; color: #12344d; }
.input { width: 1201px; height: 38px; border: 1.500px solid #cfd4d8; border-radius: 4px; font: 19.600px/36px "Liberation Sans", Arial, sans-serif; padding-left: 12px; letter-spacing: -.05px; color: #555; position: relative; }
.reddot { position: absolute; left: 956px; top: -2px; width: 6px; height: 6px; border-radius: 50%; background: #e8141c; }
.msg { display: block; height: 47px; padding-top: 14px; letter-spacing: 0; }
.editor { width: 1199px; height: 430px; border: 1.500px solid #bdbdbd; border-radius: 10px 10px 0 0; overflow: hidden; }
.edbar { height: 50px; background: linear-gradient(#f3f3f3, #fff); border-bottom: 1.500px solid #ededed; display: flex; font: 700 21px "Liberation Serif", serif; color: #555; }
.g { display: flex; align-items: center; padding-top: 5px; border-right: 1.500px solid #dadada; height: 50px; flex: none; position: relative; }
.g text { fill: #444; }
.g1 { width: 133px; padding-left: 20px; }
.g1 b { width: 40px; }
.g1 .it { font-style: italic; padding-left: 3px; }
.g1 .ul { text-decoration: underline; text-underline-offset: 3px; padding-left: 4px; }
.g2 { width: 92px; padding-left: 14px; gap: 18px; }
.g3 { width: 91px; padding-left: 17px; gap: 23px; }
.fc { border-bottom: 2.500px solid #555; width: 16px; line-height: 18px; text-align: center; }
.bc { width: 22px; height: 19px; background: #8b8b8b; color: #fff; line-height: 20px; text-align: center; }
.g4 { width: 133px; padding-left: 13px; gap: 16px; }
.clr { font-weight: 400; font-style: italic; color: #999; font-size: 19px; position: relative; margin-left: 2px; }
.clr b { position: absolute; left: 9px; top: 2px; font: 700 13px "DejaVu Sans", sans-serif; color: #444; }
.tri { position: absolute; left: 78px; bottom: 6px; border: 2.500px solid transparent; border-top-color: #888; border-bottom: 0; }
.g5 { margin-left: auto; border-left: 1.500px solid #dadada; border-right: 0; width: 48px; padding-left: 14px; font: 700 16px "Liberation Sans", sans-serif; letter-spacing: .5px; }
.edbody { display: flex; padding-top: 24px; position: relative; }
.mail { margin-left: 22.500px; width: 1129px; height: 360px; background: #f5f7f9; padding: 37px 0 0 37px; font-size: 23.500px; color: #475867; white-space: nowrap; }
.hi { font-weight: 700; font-size: 22.800px; letter-spacing: -.47px; word-spacing: 3px; color: #12344d; line-height: 36px; box-shadow: -1.500px 0 0 -.2px #12344d; height: 34px; }
.l2 { line-height: 36px; letter-spacing: -.26px; word-spacing: .4px; }
.l2 b { font-size: 22.800px; letter-spacing: -.22px; }
.para { line-height: 36px; letter-spacing: -.31px; padding: 35px 0 0; }
.view { display: block; width: 152px; height: 61px; margin-top: 35px; border-radius: 7px; background: #000; color: #fff; font-weight: 600; font-size: 23px; letter-spacing: -.1px; line-height: 62px; padding-left: 15px; }
.escroll { position: absolute; right: 0; top: 0; width: 22px; height: 380px; }
.up { display: block; border: 6.500px solid transparent; border-top: 0; border-bottom: 10px solid #8b8b8b; width: 0; }
.escroll .up { margin: 9px 0 10px 4px; }
.thumb { display: block; background: #8b8b8b; border-radius: 7px 7px 0 0; width: 13px; height: 340px; margin-left: 4px; }
.info { width: 450px; padding-left: 30px; position: relative; font-size: 20px; line-height: 33.600px; letter-spacing: -.08px; color: #484848; white-space: nowrap; overflow: hidden; }
.info h3 { font-size: 22.700px; font-weight: 600; color: #12344d; line-height: 34px; padding: 6px 0 24px; letter-spacing: .05px; }
.info p { margin-bottom: 33.600px; }
.info p:nth-of-type(2) { margin-bottom: 20.500px; letter-spacing: 0; }
.warn { display: inline-block; width: 25px; height: 25px; border-radius: 50%; background: #838383; color: #fff; text-align: center; line-height: 24px; font-size: 18px; vertical-align: 4px; margin: -4px 5px 0 0; }
.info a { color: #0069d2; }
.qmark { position: absolute; left: 399px; top: -12px; width: 72px; height: 72px; border-radius: 50%; border: 8px solid #e3e3e3; box-shadow: inset 0 0 5px #ddd; background: #fff; font-size: 32px; font-weight: 700; line-height: 56px; text-align: center; color: #d9d9d9; }
.pscroll { width: 11px; background: #fcfcfc; overflow: hidden; height: 653px; }
.pscroll .up { margin: 6px 0 27px 4px; }
.pscroll .thumb { height: 406px; border-radius: 6px; margin-left: 5px; }
.down { display: block; width: 0; border: 6.500px solid transparent; border-top: 10px solid #8b8b8b; border-bottom: 0; margin: 188px 0 0 4px; }
.chat { position: absolute; left: 1794px; top: 646px; width: 90px; height: 90px; border-radius: 50% 10px 50% 50%; background: #24313a; box-shadow: 0 5px 9px rgba(0,0,0,.4); display: flex; align-items: center; justify-content: center; }
.chat span { position: absolute; right: -5px; top: -11px; width: 28px; height: 28px; border-radius: 50%; background: #e0330c; border: 3px solid #fff; color: #fff; font-weight: 700; font-size: 15px; line-height: 21px; text-align: center; box-shadow: 0 0 3px rgba(0,0,0,.3); }

/* taskbar */
.taskbar { height: 70px; flex: none; background: #1c2f34; border-top: 2px solid #3b4b4e; display: flex; color: #fff; white-space: nowrap; font-size: 17.300px; letter-spacing: -.1px; }
.weather { width: 404px; display: flex; padding: 7px 0 0 21px; gap: 6px; }
.weather p, .clock p { line-height: 24.500px; }
.weather div { padding-top: 2px; }
.dim { color: #c5cdcf; }
.start { margin: 17px 20px 0 0; }
.tsearch { width: 330px; height: 48px; margin-top: 10px; border-radius: 24px; background: #3b4b50; border: 1.500px solid #526166; border-top-color: #68767a; display: flex; align-items: center; padding: 0 9px 0 16px; font-size: 20.800px; letter-spacing: -.3px; color: #cdd4d6; }
.tsearch svg:first-child { margin-right: 15px; }
.tsearch .emojis { margin-left: auto; }
.tasks { display: flex; margin-left: 3px; }
.tasks span { width: 66px; height: 68px; display: flex; align-items: center; justify-content: center; position: relative; }
.cmd { margin: -2px 2px 0 0; }
.run::after { content: ""; position: absolute; bottom: 5px; left: 28px; width: 10px; height: 5px; border-radius: 3px; background: #959fa2; }
.cur::before { content: ""; position: absolute; left: 3px; top: 4px; width: 60px; height: 60px; border-radius: 6px; background: #2a3c41; border: 1px solid #39494d; }
.cur svg { position: relative; margin: -10px 0 0 9px; }
.cur::after { left: 22px; width: 22px; background: #4cc2ff; }
.tg { margin: -5px 0 0 10px; }
.tray { margin-left: auto; display: flex; align-items: center; padding-right: 4px; }
.wifi { margin-left: 27px; }
.vol { margin-left: 10px; }
.batt { margin-left: 10px; }
.clock { width: 106px; text-align: right; align-self: flex-start; padding-top: 9px; }
```
